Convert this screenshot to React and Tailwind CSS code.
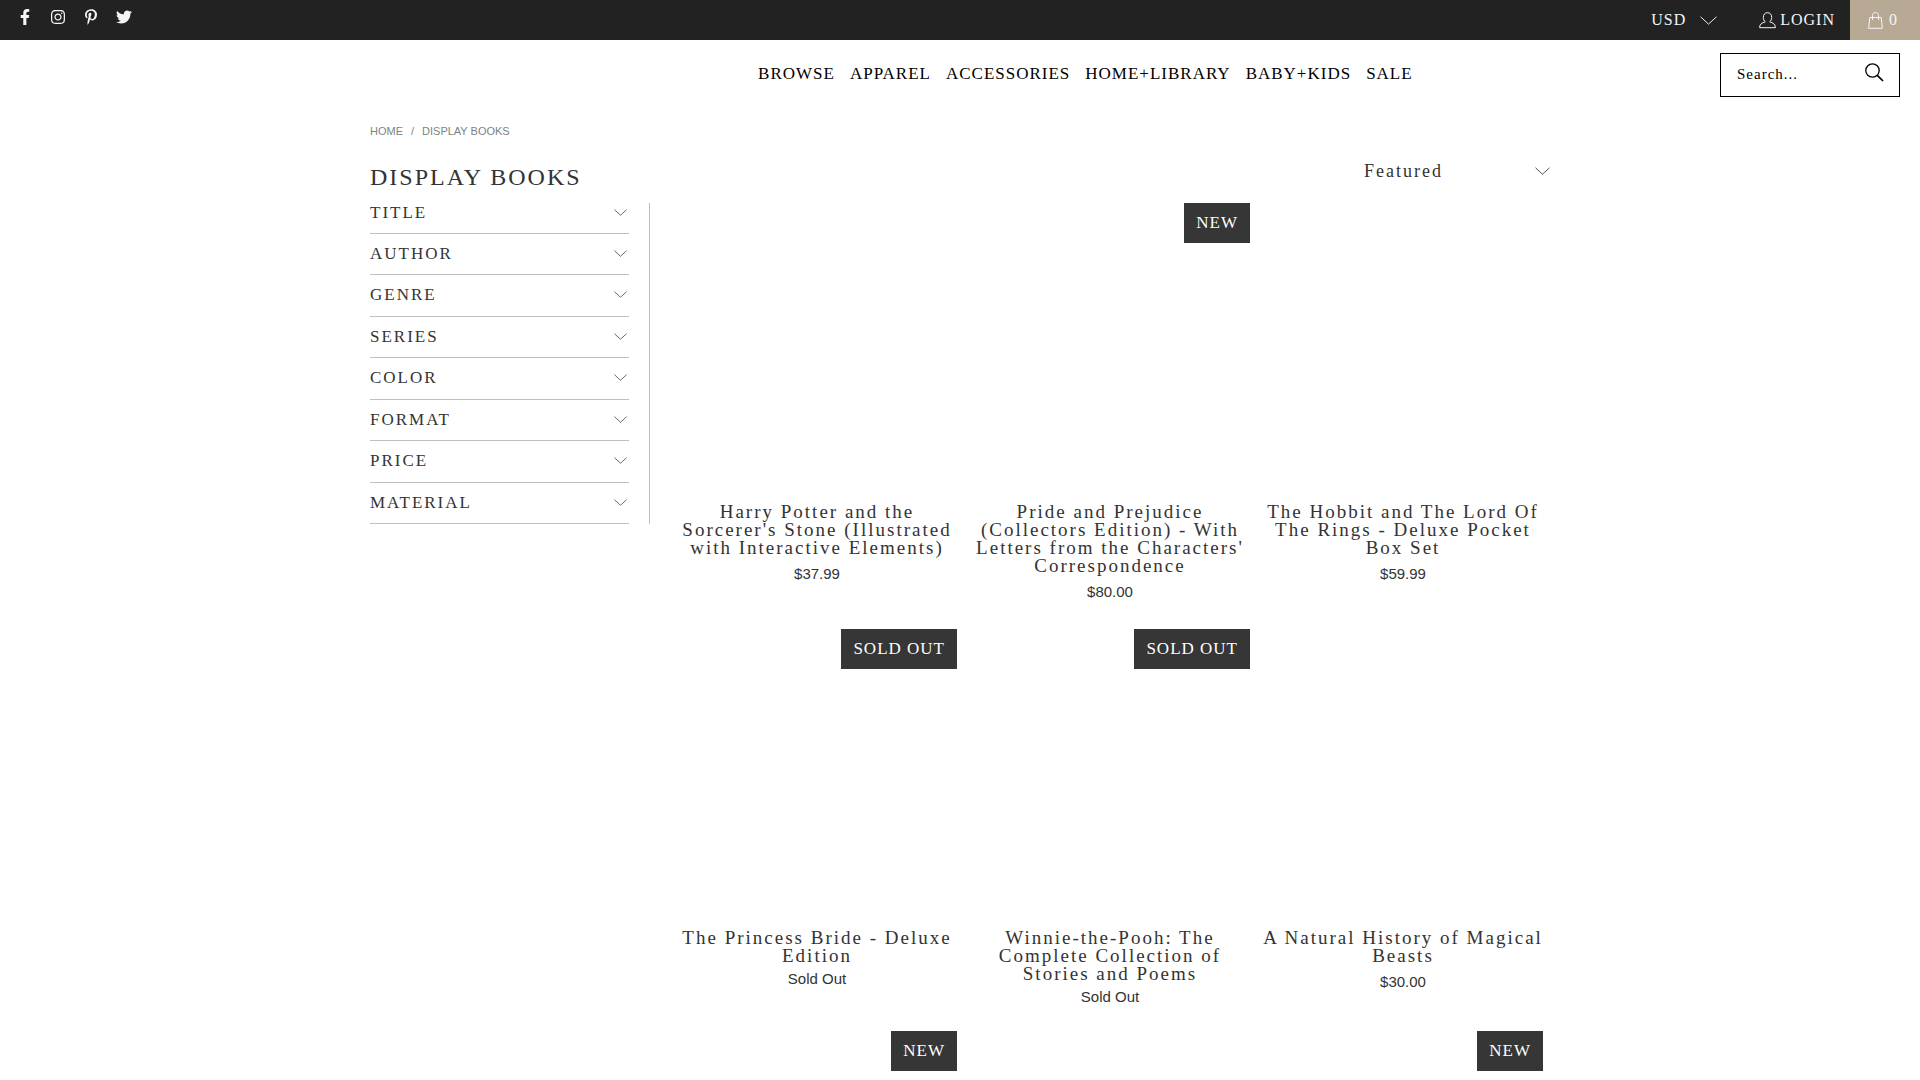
import { FaFacebookF, FaInstagram, FaPinterestP, FaTwitter } from 'react-icons/fa'

const SOCIALS = [
  { icon: FaFacebookF, label: 'Facebook' },
  { icon: FaInstagram, label: 'Instagram' },
  { icon: FaPinterestP, label: 'Pinterest' },
  { icon: FaTwitter, label: 'Twitter' },
]

const NAV = ['Browse', 'Apparel', 'Accessories', 'Home+Library', 'Baby+Kids', 'Sale']
const FILTERS = ['Title', 'Author', 'Genre', 'Series', 'Color', 'Format', 'Price', 'Material']

const PRODUCTS = [
  { id: 1, name: "Harry Potter and the Sorcerer's Stone (Illustrated with Interactive Elements)", price: '$37.99' },
  { id: 2, name: "Pride and Prejudice (Collectors Edition) - With Letters from the Characters' Correspondence", price: '$80.00', badge: 'New' },
  { id: 3, name: 'The Hobbit and The Lord Of The Rings - Deluxe Pocket Box Set', price: '$59.99' },
  { id: 4, name: 'The Princess Bride - Deluxe Edition', badge: 'Sold Out' },
  { id: 5, name: 'Winnie-the-Pooh: The Complete Collection of Stories and Poems', badge: 'Sold Out' },
  { id: 6, name: 'A Natural History of Magical Beasts', price: '$30.00' },
  { id: 7, badge: 'New' },
  { id: 8 },
  { id: 9, badge: 'New' },
]

export default function App() {
  return (
    <div className="h-screen overflow-hidden bg-white font-['Liberation_Serif',serif] text-[#333333]">
      <TopBar />
      <Header />
      <main className="mx-auto max-w-[1180px]">
        <Breadcrumb />
        <div className="mt-[17px] flex items-start justify-between">
          <h1 className="mt-1 text-[24px] leading-8 tracking-[2px] uppercase">Display Books</h1>
          <SortSelect />
        </div>
        <div className="flex items-start">
          <Sidebar />
          <section className="ml-[27px] mr-[7px] grid flex-1 grid-cols-3 gap-x-[13px]">
            {PRODUCTS.map(p => <Product key={p.id} {...p} />)}
          </section>
        </div>
      </main>
    </div>
  )
}

function TopBar() {
  return (
    <div className="flex h-10 justify-between bg-[#222222] text-[#f5f5f5]">
      <ul className="flex gap-[17px] pt-[9px] pl-[17px]">
        {SOCIALS.map(({ icon: Icon, label }) => (
          <li key={label}>
            <a href="#" aria-label={label} className="flex w-4 justify-center"><Icon size={16} /></a>
          </li>
        ))}
      </ul>
      <div className="flex items-center text-[16px] tracking-[1px]">
        <div className="relative mr-[42px] flex items-center">
          <select aria-label="Currency" className="w-[66px] appearance-none bg-transparent tracking-[1px] outline-none">
            <option>USD</option>
          </select>
          <Chevron className="pointer-events-none absolute right-0 h-[9px] w-[17px]" />
        </div>
        <a href="#" className="mr-[15px] flex items-center gap-1">
          <UserIcon />
          LOGIN
        </a>
        <a href="#" aria-label="Cart" className="flex h-10 w-[70px] items-center gap-1.5 bg-[#b8a995] pl-[18px]">
          <BagIcon />
          0
        </a>
      </div>
    </div>
  )
}

/* ── Main navigation and search ── */
function Header() {
  return (
    <header className="grid h-[70px] grid-cols-[14fr_auto_9fr] items-center pr-5 text-black">
      <nav className="col-start-2 mb-[2px] flex gap-[15px] text-[17px] leading-5 tracking-[1px] uppercase">
        {NAV.map(item => <a key={item} href="#">{item}</a>)}
      </nav>
      <form className="flex h-11 w-[180px] items-center justify-self-end border border-black pr-[15px] pb-[2px] pl-4">
        <input
          type="text"
          aria-label="Search"
          placeholder="Search..."
          className="w-full min-w-0 flex-1 text-[15px] tracking-[1px] outline-none placeholder:text-black"
        />
        <button type="button" aria-label="Submit search"><SearchIcon /></button>
      </form>
    </header>
  )
}

function Breadcrumb() {
  return (
    <div className="mt-3 flex gap-2 font-['Liberation_Sans',sans-serif] text-[11px] leading-[18px] text-[#7b8484] uppercase">
      <a href="#">Home</a>
      <span>/</span>
      <a href="#">Display Books</a>
    </div>
  )
}

function SortSelect() {
  return (
    <div className="relative mb-[18px] flex w-[186px] items-center">
      <select aria-label="Sort by" className="h-7 w-full appearance-none bg-transparent text-[18px] tracking-[2px] outline-none">
        <option>Featured</option>
      </select>
      <Chevron className="pointer-events-none absolute right-0 h-[8px] w-[15px]" />
    </div>
  )
}

function Sidebar() {
  return (
    <aside className="flex h-[321px] w-[280px] flex-col border-r border-[#bfbfbf] pr-5">
      {FILTERS.map((name, i) => (
        <button
          key={name}
          className={`flex w-full justify-between border-b border-[#bfbfbf] pr-[2px] text-left text-[17px] leading-5 tracking-[2px] uppercase ${
            i === 0 ? 'h-[31px]' : 'flex-1 pt-[10px]'
          }`}
        >
          {name}
          <Chevron className="mt-[6px] h-[7px] w-[13px]" />
        </button>
      ))}
    </aside>
  )
}

function Product({ name, price, badge }) {
  return (
    <article className="text-center">
      <a href="#" className="block">
        <div className="flex aspect-square items-start justify-end">
          {badge && (
            <span className="bg-[#363636] px-3 text-[17px] leading-10 tracking-[1px] text-white uppercase">{badge}</span>
          )}
        </div>
        {name && <h2 className="mt-5 text-[19px] leading-[18px] tracking-[2px]">{name}</h2>}
      </a>
      {name && (
        <p className={`font-['Liberation_Sans',sans-serif] text-[15px] leading-5 ${price ? 'mt-[7px] mb-[27px]' : 'mt-1 mb-6'}`}>
          {price || 'Sold Out'}
        </p>
      )}
    </article>
  )
}

/* ── Icons ── */
function Chevron({ className }) {
  return (
    <svg viewBox="0 0 16 8" fill="none" stroke="currentColor" strokeWidth="0.9" className={className}>
      <path d="M0.5 0.5 8 7.4 15.5 0.5" />
    </svg>
  )
}

function UserIcon() {
  return (
    <svg width="17" height="17" viewBox="0 0 17 17" fill="none" stroke="currentColor">
      <path d="M6.3 9.8C5 8.900 4.300 7.200 4.300 5.400 4.300 2.500 6 .700 8.500.700s4.200 1.800 4.200 4.700c0 1.800-.700 3.500-2 4.400 3.300 1.200 5.700 2 5.700 5.900H.600c0-3.900 2.400-4.700 5.700-5.900z" />
    </svg>
  )
}

function BagIcon() {
  return (
    <svg width="15" height="17" viewBox="0 0 15 17" fill="none" stroke="currentColor">
      <path d="M1.8 5.500h11.400l1.200 10.800H.6zM4.500 8V3.500c0-1.800 1.200-3 3-3s3 1.200 3 3V8" />
    </svg>
  )
}

function SearchIcon() {
  return (
    <svg width="19" height="19" viewBox="0 0 19 19" fill="none" stroke="currentColor" className="mb-1">
      <circle cx="7.5" cy="7.5" r="6.7" strokeWidth="1.3" />
      <path d="m12.3 12.3 5.7 5.7" strokeWidth="1.7" />
    </svg>
  )
}
